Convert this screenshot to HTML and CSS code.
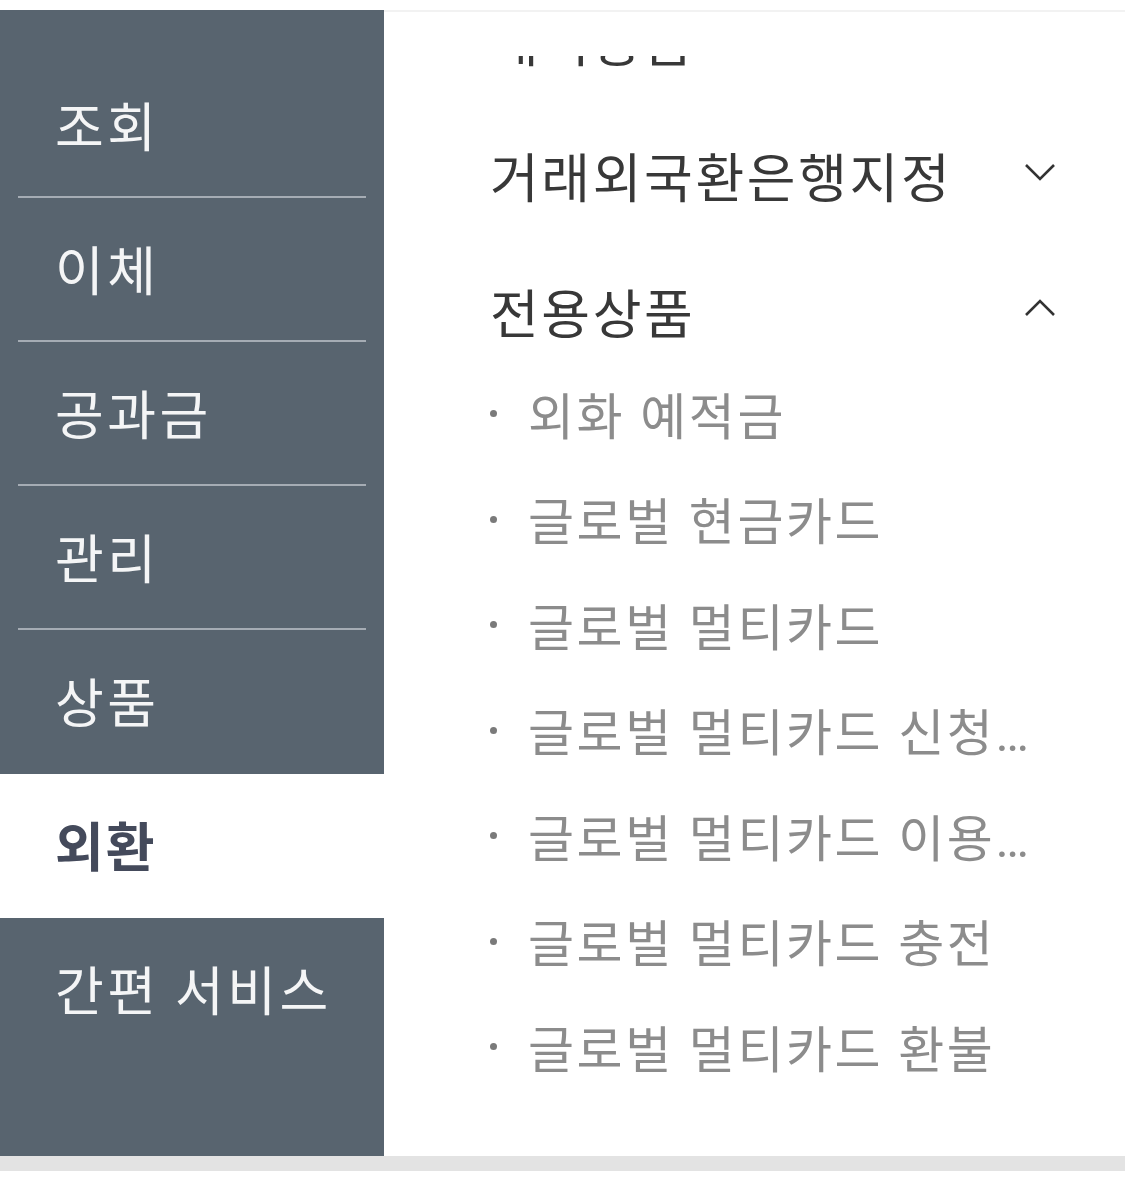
FILE: index.html
```html
<!DOCTYPE html>
<html>

<head>
    <link rel="stylesheet" href="styles.css">
</head>

<body>
    <div id="app">
        <ul class="sidebar">
            <li class="menu-item">조회</li>
            <li class="menu-item">이체</li>
            <li class="menu-item">공과금</li>
            <li class="menu-item">관리</li>
            <li class="menu-item before-active">상품</li>
            <li class="menu-item active">외환</li>
            <li class="menu-item">간편 서비스</li>
        </ul>

        <div class="panel">
            <div class="panel-scroll">
                <div class="panel-list">
                    <div class="group">
                        <div class="group-title">
                            <span>해외송금</span>
                        </div>
                    </div>

                    <div class="group">
                        <div class="group-title">
                            <span>거래외국환은행지정</span>
                            <svg class="chevron" viewBox="0 0 32 18"><path d="M2 2 L16 16 L30 2" /></svg>
                        </div>
                    </div>

                    <div class="group open">
                        <div class="group-title">
                            <span>전용상품</span>
                            <svg class="chevron" viewBox="0 0 32 18"><path d="M2 16 L16 2 L30 16" /></svg>
                        </div>
                        <ul class="sub-list">
                            <li class="sub-item"><span class="sub-text">외화 예적금</span></li>
                            <li class="sub-item"><span class="sub-text">글로벌 현금카드</span></li>
                            <li class="sub-item"><span class="sub-text">글로벌 멀티카드</span></li>
                            <li class="sub-item"><span class="sub-text">글로벌 멀티카드 신청내역조회</span></li>
                            <li class="sub-item"><span class="sub-text">글로벌 멀티카드 이용내역조회</span></li>
                            <li class="sub-item"><span class="sub-text">글로벌 멀티카드 충전</span></li>
                            <li class="sub-item"><span class="sub-text">글로벌 멀티카드 환불</span></li>
                        </ul>
                    </div>
                </div>
            </div>
        </div>
    </div>
    <div class="bottom-bar"></div>
</body>

</html>
```

FILE: styles.css
```css
body {
    margin: 0;
    background-color: white;
    font-family: 'Noto Sans CJK KR', 'Noto Sans', sans-serif;
}

ul {
    margin: 0;
    padding: 0;
    list-style: none;
}

#app {
    display: flex;
    height: 1156px;
    padding-top: 10px;
    box-sizing: border-box;
}

.sidebar {
    flex: 0 0 384px;
    background-color: #58646f;
    padding-top: 44px;
}

.menu-item {
    position: relative;
    display: flex;
    align-items: center;
    height: 144px;
    padding: 0 0 4px 55px;
    box-sizing: border-box;
    font-size: 53px;
    letter-spacing: 3.5px;
    color: #f4f5f6;
    white-space: nowrap;
}

.menu-item::after {
    position: absolute;
    left: 18px;
    right: 18px;
    bottom: 0;
    height: 2px;
    background-color: #a5acb4;
    content: " ";
}

.menu-item.before-active::after,
.menu-item.active::after,
.menu-item:last-child::after {
    display: none;
}

.menu-item.active {
    background-color: white;
    color: #444a5b;
    font-weight: bold;
    letter-spacing: 2px;
}

.panel {
    flex: 1 1 auto;
    display: flex;
    flex-direction: column;
    border-top: 2px solid #f2f2f2;
    padding-top: 44px;
    min-width: 0;
}

.panel-scroll {
    flex: 1 1 auto;
    overflow: hidden;
}

.panel-list {
    margin-top: -86px;
    padding: 0 66px 0 106px;
}

.group-title {
    display: flex;
    align-items: center;
    justify-content: space-between;
    height: 136px;
    font-size: 53px;
    letter-spacing: 2.6px;
    color: #383838;
}

.group-title span {
    padding-top: 2px;
}

.chevron {
    width: 32px;
    height: 18px;
    margin: 0 3px 4px 0;
    fill: none;
    stroke: #333;
    stroke-width: 2.6;
}

.sub-list {
    margin-top: -18px;
}

.sub-item {
    display: flex;
    align-items: center;
    height: 105.5px;
    font-family: Roboto, 'Noto Sans CJK KR', sans-serif;
    font-size: 50px;
    letter-spacing: 2.6px;
    color: #8c8c8c;
}

.sub-item::before {
    flex: 0 0 auto;
    width: 7px;
    height: 7px;
    margin: 2px 31px 0 0;
    border-radius: 50%;
    background-color: #7a7a7a;
    content: " ";
}

.sub-text {
    flex: 1 1 auto;
    min-width: 0;
    overflow: hidden;
    white-space: nowrap;
    text-overflow: ellipsis;
}

.bottom-bar {
    height: 15px;
    background-color: #e3e3e3;
}
```
